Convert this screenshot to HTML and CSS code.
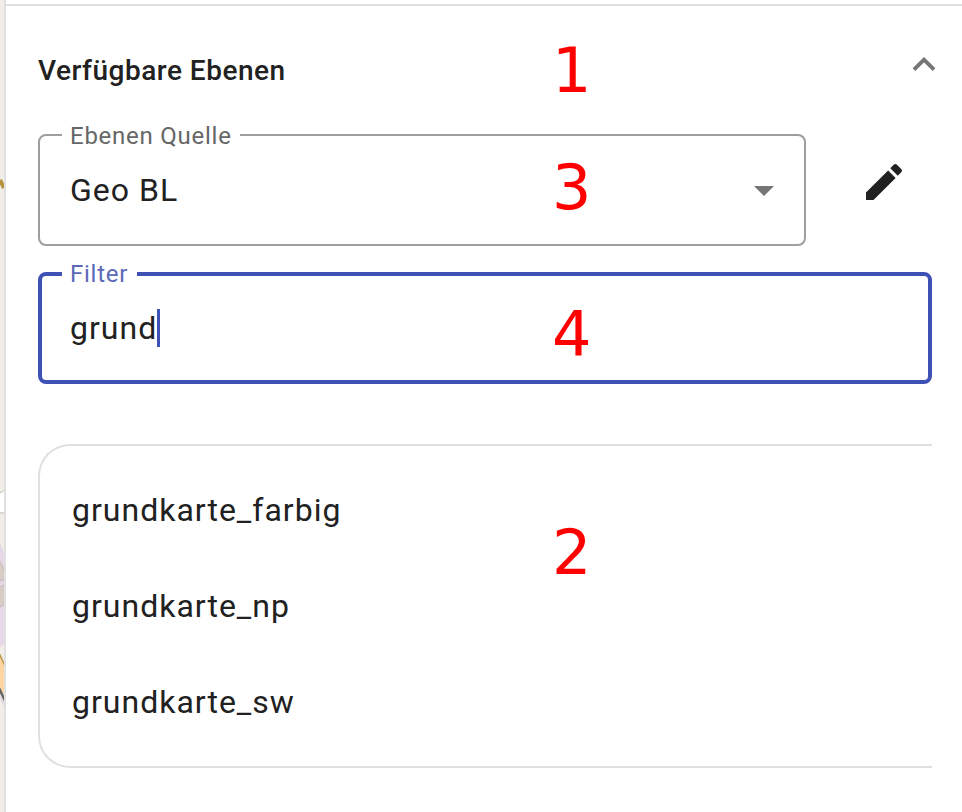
FILE: index.html
```html
<!DOCTYPE html>
<html lang="de">
<head>
<meta charset="utf-8">
<title>Verfügbare Ebenen</title>
<link rel="stylesheet" href="styles.css">
</head>
<body>
<div class="app">
  <div class="map">
    <svg width="4" height="812" viewBox="0 0 4 812">
      <path d="M0 180L4 188" stroke="#b9933f" stroke-width="4"/>
      <path d="M-3 493Q3 493 6 488V514Q3 512 -3 513Z" fill="#fff" stroke="#bbb"/>
      <path d="M0 543Q3 548 4 554V643Q3 646 0 647Z" fill="#e6d8e7"/>
      <path d="M-2 558Q3 565 6 576V579L-2 582ZM-2 588L6 584V604L-2 608Z" fill="#d6cdc7" stroke="#cbbab5"/>
      <path d="M0 655L4 664V694L0 689Z" fill="#ffd5a0"/>
      <path d="M-1 653L5 666" stroke="#b9933f" stroke-width="1.5"/>
      <path d="M-1 688L5 701" stroke="#666" stroke-width="2.5"/>
      <path d="M-1 694L5 707" stroke="#e6d8e7" stroke-width="2"/>
    </svg>
  </div>
  <main class="panel">
    <header class="header">
      <h1 class="title">Verfügbare Ebenen</h1>
      <svg class="chevron" width="24" height="16" viewBox="0 0 24 16"><path d="M2 13.7L12 3.7L22 13.7" fill="none" stroke="#757575" stroke-width="3.8"/></svg>
      <span class="marker marker-header">1</span>
    </header>
    <div class="source-row">
      <div class="field source">
        <span class="label">Ebenen Quelle</span>
        <span class="value">Geo BL</span>
        <svg class="arrow" width="20" height="10" viewBox="0 0 20 10"><path d="M0 0H20L10 10Z" fill="#757575"/></svg>
        <span class="marker marker-source">3</span>
      </div>
      <svg class="edit" width="48" height="48" viewBox="0 0 24 24"><path fill="#212121" d="M3 17.25V21h3.75L17.81 9.94l-3.75-3.75L3 17.25zM20.71 7.04a1 1 0 0 0 0-1.41l-2.34-2.34a1 1 0 0 0-1.41 0l-1.83 1.83 3.75 3.75 1.83-1.83z"/></svg>
    </div>
    <div class="field filter">
      <span class="label">Filter</span>
      <span class="value">grund</span><span class="caret"></span>
      <span class="marker marker-filter">4</span>
    </div>
    <ul class="layers">
      <li class="layer">grundkarte_farbig</li>
      <li class="layer">grundkarte_np</li>
      <li class="layer">grundkarte_sw</li>
      <li class="marker marker-list">2</li>
    </ul>
  </main>
</div>
</body>
</html>
```
FILE: styles.css
```css
* { box-sizing: border-box; }
body {
  margin: 0;
  background: #fff;
  color: #212121;
  font-family: Roboto, sans-serif;
}
.app { display: flex; height: 812px; overflow: hidden; }
.map { width: 4px; background: #f1eee8; }
.map svg { display: block; }
.panel {
  flex: 1;
  border-left: 2px solid #e0e0e0;
  padding: 4px 30px 0 32px;
}
.header {
  position: relative;
  display: flex;
  align-items: center;
  justify-content: space-between;
  height: 130px;
  margin: 0 -30px 0 -32px;
  padding: 2px 26px 0 32px;
  border-top: 2px solid #e0e0e0;
}
.title { margin: 0; font-size: 28px; font-weight: 500; line-height: 40px; letter-spacing: .5px; }
.chevron { margin-top: -14px; }
.source-row { display: flex; align-items: flex-start; justify-content: space-between; }
.field {
  position: relative;
  display: flex;
  align-items: center;
  height: 112px;
  border-radius: 8px;
  font-size: 32px;
  line-height: 36px;
  letter-spacing: 1px;
}
.source {
  width: 768px;
  border: 2px solid #9e9e9e;
  padding: 0 30px;
  justify-content: space-between;
}
.arrow { margin-top: 2px; }
.filter { margin-top: 26px; border: 4px solid #3f51b5; padding: 0 28px; }
.label {
  position: absolute;
  top: -14px;
  left: 22px;
  padding: 0 8px;
  background: #fff;
  color: #666;
  font-size: 24px;
  line-height: 28px;
  letter-spacing: .75px;
}
.filter .label { top: -16px; left: 20px; padding-right: 9px; color: #5b69b8; }
.caret { width: 3px; height: 38px; background: #3f51b5; }
.edit { margin: 24px 24px 0 0; }
.layers {
  position: relative;
  height: 324px;
  margin: 60px 0 0;
  padding: 16px 32px;
  list-style: none;
  border: 2px solid #e0e0e0;
  border-right: 0;
  border-radius: 32px 0 0 32px;
}
.layer { height: 96px; font-size: 32px; line-height: 96px; letter-spacing: 1px; }
.marker {
  position: absolute;
  color: #f00;
  font-family: "DejaVu Sans", sans-serif;
  font-size: 62px;
  line-height: 72px;
  letter-spacing: 0;
}
.marker-header { left: 546px; top: 29px; }
.marker-source { left: 512px; top: 16px; }
.marker-filter { left: 510px; top: 23px; }
.marker-list { left: 512px; top: 71px; }
```
